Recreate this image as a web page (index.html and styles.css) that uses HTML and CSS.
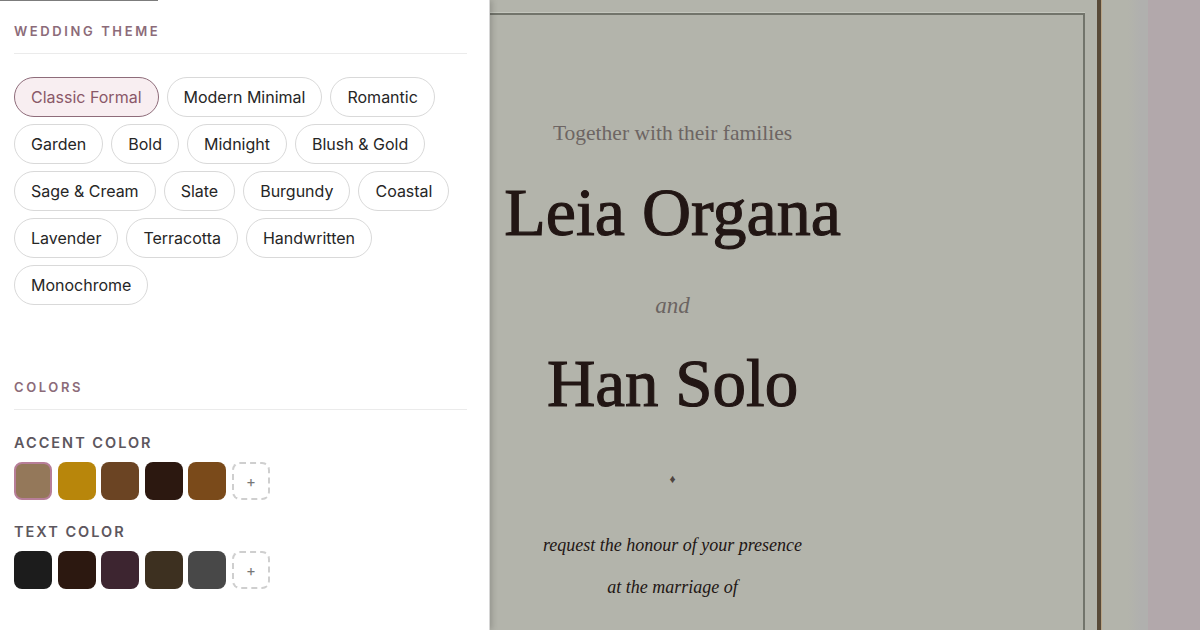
FILE: index.html
```html
<!DOCTYPE html>
<html lang="en">
<head>
<meta charset="utf-8">
<title>Wedding invitation editor</title>
<link rel="stylesheet" href="styles.css">
</head>
<body>
<main class="stage">
  <div class="paper">
    <div class="frame">
      <p class="intro">Together with their families</p>
      <h1 class="name name-first">Leia Organa</h1>
      <p class="and">and</p>
      <h1 class="name name-second">Han Solo</h1>
      <div class="ornament">&#9830;</div>
      <p class="line line-first">request the honour of your presence</p>
      <p class="line line-second">at the marriage of</p>
    </div>
  </div>
</main>
<div class="edge"></div>

<aside class="sidebar">
  <div class="tab-stub"></div>
  <section class="section">
    <h2 class="section-title">Wedding Theme</h2>
    <div class="chips">
      <button class="chip chip-active">Classic Formal</button>
      <button class="chip">Modern Minimal</button>
      <button class="chip">Romantic</button>
      <button class="chip">Garden</button>
      <button class="chip">Bold</button>
      <button class="chip">Midnight</button>
      <button class="chip">Blush &amp; Gold</button>
      <button class="chip">Sage &amp; Cream</button>
      <button class="chip">Slate</button>
      <button class="chip">Burgundy</button>
      <button class="chip">Coastal</button>
      <button class="chip">Lavender</button>
      <button class="chip">Terracotta</button>
      <button class="chip">Handwritten</button>
      <button class="chip">Monochrome</button>
    </div>
  </section>

  <section class="section section-colors">
    <h2 class="section-title">Colors</h2>
    <div class="color-group">
      <h3 class="group-title">Accent Color</h3>
      <div class="swatches">
        <span class="swatch swatch-selected" style="background:#94785a"></span>
        <span class="swatch" style="background:#b8860b"></span>
        <span class="swatch" style="background:#6b4423"></span>
        <span class="swatch" style="background:#2c1810"></span>
        <span class="swatch" style="background:#7a4a1a"></span>
        <span class="swatch swatch-add">+</span>
      </div>
    </div>
    <div class="color-group">
      <h3 class="group-title">Text Color</h3>
      <div class="swatches">
        <span class="swatch" style="background:#1c1c1c"></span>
        <span class="swatch" style="background:#2c1810"></span>
        <span class="swatch" style="background:#3d2530"></span>
        <span class="swatch" style="background:#3d3020"></span>
        <span class="swatch" style="background:#484848"></span>
        <span class="swatch swatch-add">+</span>
      </div>
    </div>
  </section>
</aside>
</body>
</html>
```

FILE: styles.css
```css
* { box-sizing: border-box; }

html, body {
  margin: 0;
  padding: 0;
}

body {
  width: 1200px;
  height: 630px;
  overflow: hidden;
  display: flex;
  position: relative;
  background: #b2a8ab;
  font-family: "Inter", "Liberation Sans", sans-serif;
}

/* ---------- preview stage ---------- */
.stage {
  width: 1148px;
  height: 630px;
  flex: none;
  background: linear-gradient(to right, #b3b4ab 0, #b3b4ab 1128px, #b0b0ae 1140px, #b0b0ae 100%);
  padding-left: 243px;
  overflow: hidden;
}

.paper {
  width: 858px;
  height: 630px;
  background: #b3b4ab;
  border-right: 4px solid #584a38;
  box-shadow: 1px 0 0 #b8a486;
  padding: 13px 12px 0 17px;
}

.frame {
  height: 100%;
  border: 2px solid #72746b;
  border-bottom: none;
  box-shadow: 0 -1px 0 #c4c6bd;
  display: flex;
  flex-direction: column;
  align-items: center;
  text-align: center;
  color: #221614;
  font-family: "Liberation Serif", "Times New Roman", serif;
}

.intro {
  margin: 105px 0 0;
  font-size: 21.5px;
  line-height: 26px;
  color: #6d6563;
}

.name {
  margin: 0;
  font-weight: 400;
  line-height: 1;
  color: #221614;
  -webkit-text-stroke: 1.1px #221614;
}

.name-first {
  margin-top: 32px;
  font-size: 68px;
  height: 68px;
}

.and {
  margin: 45px 0 0;
  font-style: italic;
  font-size: 23px;
  line-height: 30px;
  color: #6b6462;
}

.name-second {
  margin-top: 29px;
  font-size: 67px;
  height: 67px;
}

.ornament {
  margin-top: 54px;
  font-size: 12px;
  line-height: 16px;
  color: #4f4540;
}

.line {
  margin: 0;
  font-style: italic;
  font-size: 18px;
  line-height: 24px;
  color: #221614;
}

.line-first { margin-top: 46px; }
.line-second { margin-top: 18px; }

.edge {
  flex: 1;
  background: #b2a8ab;
}

/* ---------- sidebar drawer ---------- */
.sidebar {
  position: absolute;
  top: 0;
  left: 0;
  width: 490px;
  height: 630px;
  background: #ffffff;
  border-right: 1px solid #d6d6d6;
  box-shadow: 2px 0 6px rgba(0, 0, 0, 0.18);
  padding: 0 22px 0 14px;
}

.tab-stub {
  position: absolute;
  top: 0;
  left: 0;
  width: 158px;
  height: 1px;
  background: #7c7c7c;
}

.section {
  padding-top: 22px;
}

.section-colors {
  padding-top: 73px;
}

.section-title {
  margin: 0;
  padding-bottom: 13px;
  border-bottom: 1px solid #ebebeb;
  font-size: 13px;
  line-height: 18px;
  font-weight: 600;
  letter-spacing: 2.6px;
  text-transform: uppercase;
  color: #8c6b79;
}

.chips {
  margin-top: 23px;
  display: flex;
  flex-wrap: wrap;
  gap: 7px 8px;
}

.chip {
  height: 40px;
  padding: 0 16px;
  border: 1.5px solid #d9d9d9;
  border-radius: 20px;
  background: #ffffff;
  font-family: inherit;
  font-size: 16px;
  color: #262626;
  cursor: pointer;
}

.chip-active {
  background: #f8eef1;
  border-color: #8e6c7a;
  color: #8a5868;
}

.color-group {
  margin-top: 24px;
}

.color-group + .color-group {
  margin-top: 23px;
}

.group-title {
  margin: 0;
  font-size: 14.5px;
  line-height: 18px;
  font-weight: 600;
  letter-spacing: 2px;
  text-transform: uppercase;
  color: #5d575e;
}

.swatches {
  margin-top: 10px;
  display: flex;
  gap: 5.6px;
}

.swatch {
  width: 38px;
  height: 38px;
  border-radius: 8px;
  flex: none;
}

.swatch-selected {
  border: 2px solid #b77e98;
}

.swatch-add {
  border: 2px dashed #cfcfcf;
  display: flex;
  align-items: center;
  justify-content: center;
  font-size: 15px;
  color: #777777;
}
```
